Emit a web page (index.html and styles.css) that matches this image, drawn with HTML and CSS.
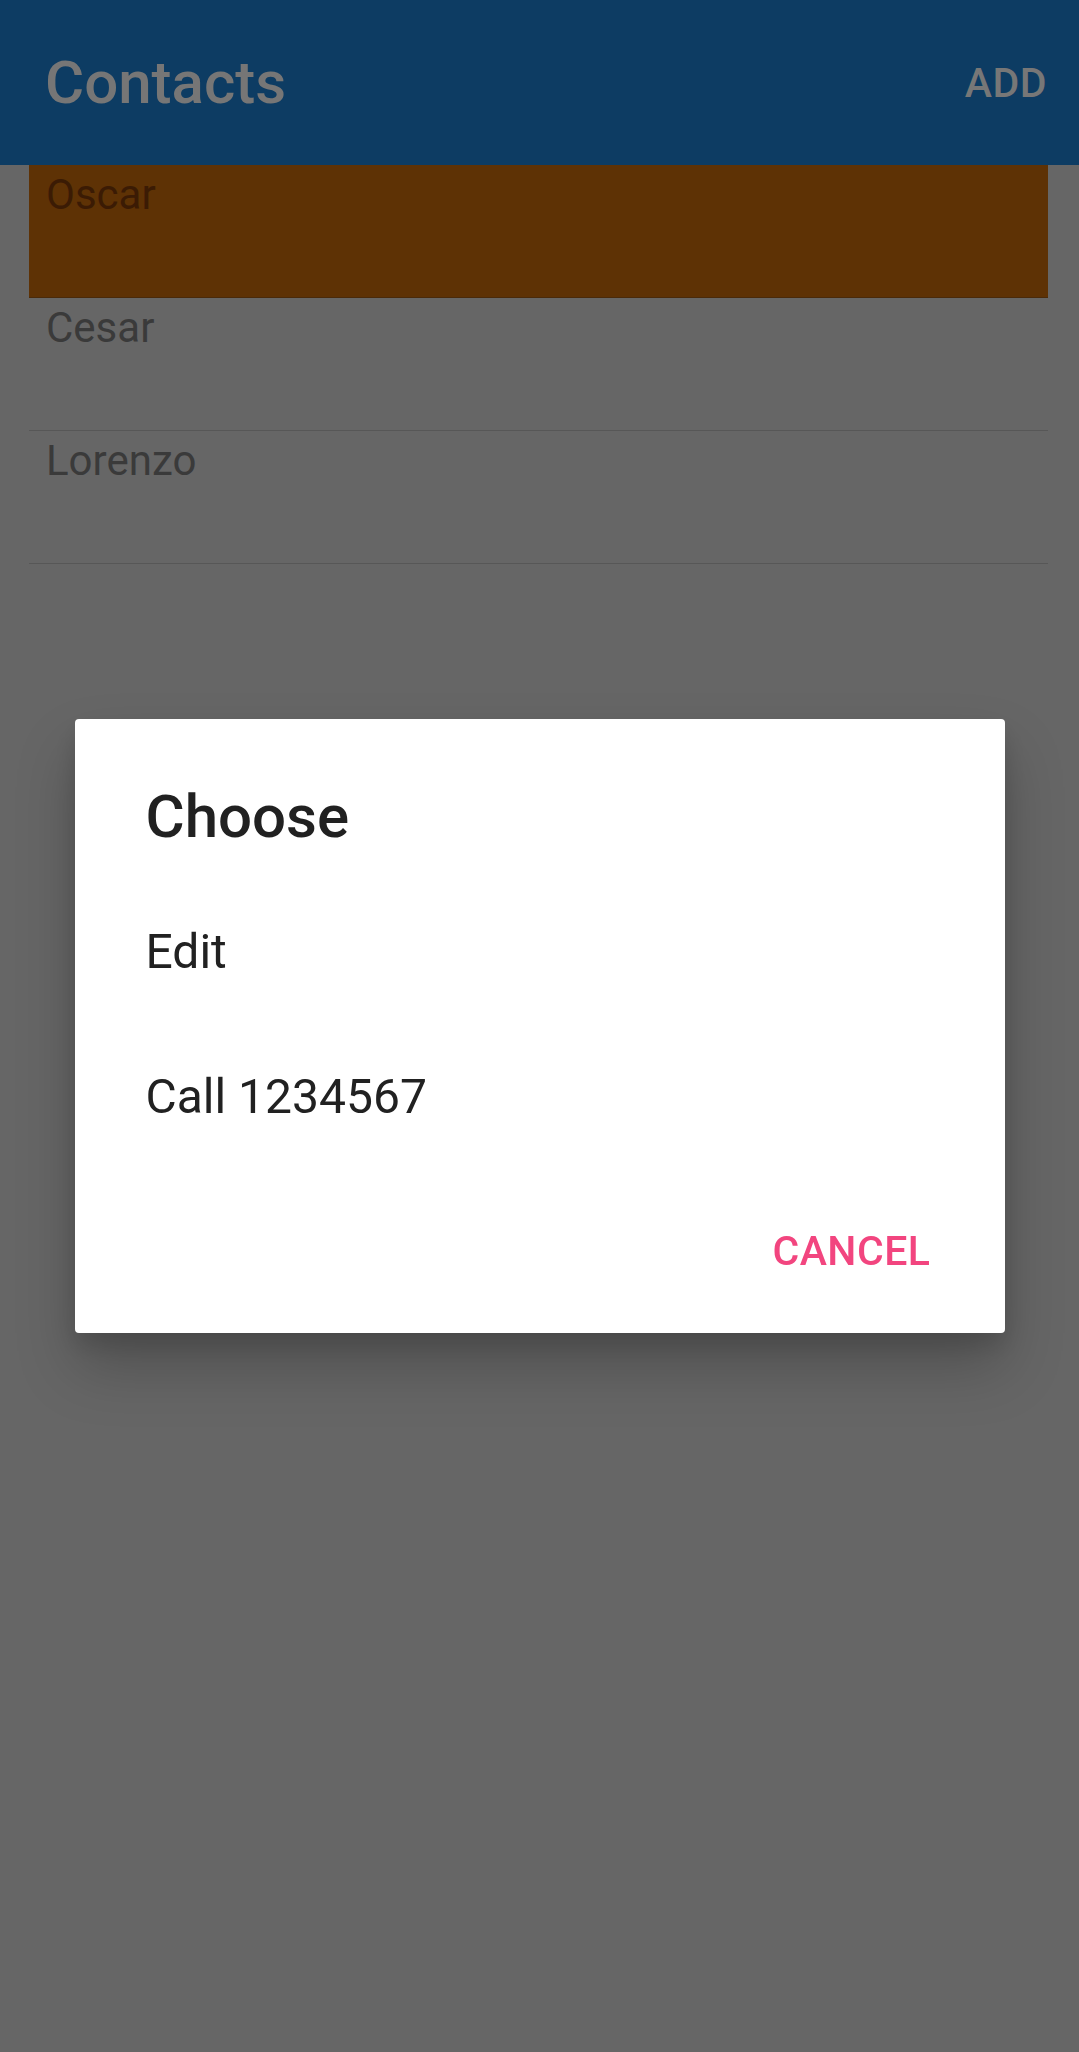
FILE: index.html
```html
<!DOCTYPE html>
<html lang="en">
<head>
<meta charset="utf-8">
<title>Contacts</title>
<link rel="stylesheet" href="styles.css">
</head>
<body>
<div class="app">
  <header class="toolbar">
    <h1 class="toolbar-title">Contacts</h1>
    <span class="toolbar-action">ADD</span>
  </header>
  <ul class="contact-list">
    <li class="contact-row selected">Oscar</li>
    <li class="contact-row">Cesar</li>
    <li class="contact-row">Lorenzo</li>
  </ul>
</div>
<div class="overlay">
  <div class="dialog">
    <h2 class="dialog-title">Choose</h2>
    <div class="dialog-item">Edit</div>
    <div class="dialog-item">Call 1234567</div>
    <div class="dialog-actions">
      <span class="dialog-button">CANCEL</span>
    </div>
  </div>
</div>
</body>
</html>
```
FILE: styles.css
```css
* { box-sizing: border-box; }
html, body {
  margin: 0;
  padding: 0;
}
body {
  width: 1079px;
  height: 2052px;
  background: #666666;
  font-family: Roboto, "Noto Sans", "Liberation Sans", sans-serif;
  overflow: hidden;
}
.app {
  display: flex;
  flex-direction: column;
}
.toolbar {
  height: 165px;
  background: #0d3c63;
  display: flex;
  align-items: center;
  justify-content: space-between;
  padding: 0 32px 0 45px;
}
.toolbar-title {
  margin: 0;
  font-size: 60px;
  line-height: 70px;
  font-weight: 500;
  color: #767676;
}
.toolbar-action {
  font-size: 41px;
  line-height: 70px;
  font-weight: 500;
  letter-spacing: 0.5px;
  color: #777777;
}
.contact-list {
  list-style: none;
  margin: 0 31px 0 29px;
  padding: 0;
}
.contact-row {
  height: 133px;
  padding-left: 17px;
  font-size: 42px;
  line-height: 60px;
  color: #3a3a3a;
  border-bottom: 1px solid #575757;
}
.contact-row.selected {
  background: #5e3205;
  color: #3b1b04;
  border-bottom-color: #4a2a0a;
}
.overlay {
  position: fixed;
  inset: 0;
  display: flex;
  align-items: center;
  justify-content: center;
}
.dialog {
  width: 930px;
  height: 614px;
  background: #ffffff;
  border-radius: 4px;
  padding: 63px 74px 32px 71px;
  display: flex;
  flex-direction: column;
  box-shadow: 0 34px 60px rgba(0, 0, 0, 0.22), 0 12px 24px rgba(0, 0, 0, 0.12);
}
.dialog-title {
  margin: 0 0 27px 0;
  font-size: 60px;
  line-height: 70px;
  font-weight: 500;
  color: #212121;
}
.dialog-item {
  height: 145px;
  font-size: 48px;
  line-height: 145px;
  color: #212121;
}
.dialog-actions {
  margin-top: 32px;
  display: flex;
  justify-content: flex-end;
}
.dialog-button {
  font-size: 41px;
  line-height: 100px;
  font-weight: 500;
  letter-spacing: 0.5px;
  color: #f2457f;
}
```
